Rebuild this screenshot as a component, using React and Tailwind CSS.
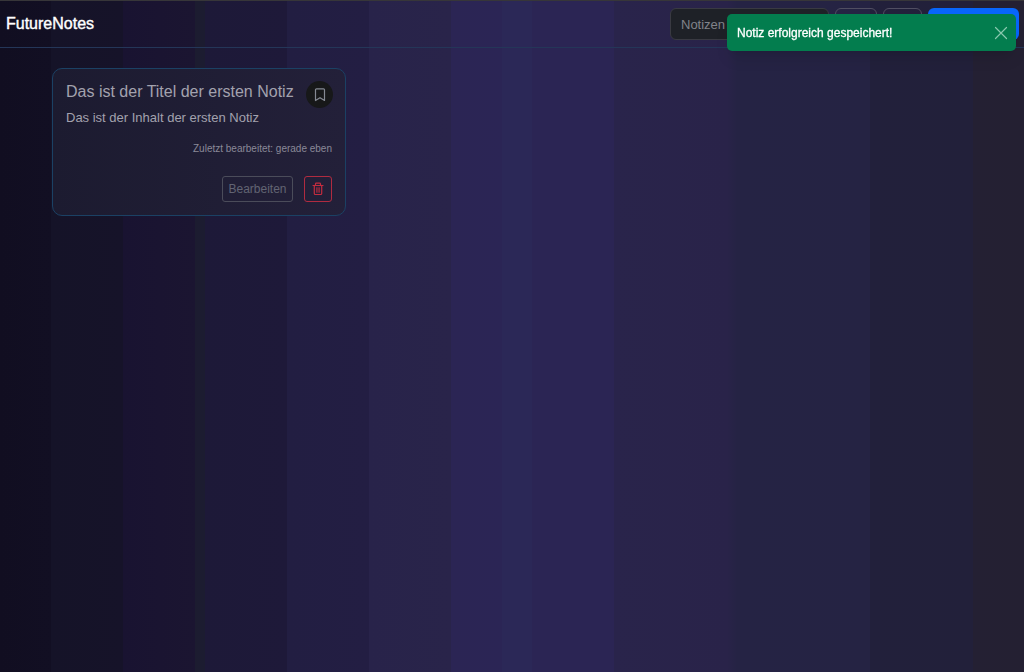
import React, { useState } from 'react';

function BookmarkIcon() {
  return (
    <svg viewBox="0 0 12 14" className="w-3 h-3.5" fill="none" stroke="currentColor" strokeWidth="1.2" strokeLinejoin="round" aria-hidden="true">
      <path d="M1.5 12.5V1.8c0-.6.4-1 1-1h7c.6 0 1 .4 1 1v10.7L6 9.7z" />
    </svg>
  );
}

function TrashIcon() {
  return (
    <svg viewBox="0 0 12 14" className="w-3 h-3.5" fill="none" stroke="currentColor" strokeWidth="1.2" strokeLinecap="round" strokeLinejoin="round" aria-hidden="true">
      <path d="M1 3.5h10M3.5 3.3V2c0-.5.3-.8.8-.8h3.4c.5 0 .8.3.8.8v1.3M2.3 3.7v7.8c0 .6.4 1 1 1h5.4c.6 0 1-.4 1-1V3.7" />
      <path d="M4.7 5.7v4.6M6 5.7v4.6M7.3 5.7v4.6" strokeWidth="0.8" />
    </svg>
  );
}

function CloseIcon() {
  return (
    <svg viewBox="0 0 14 14" className="w-3.5 h-3.5" fill="none" stroke="currentColor" strokeWidth="1.2" strokeLinecap="round" aria-hidden="true">
      <path d="M1.5 1.5l11 11M12.5 1.5l-11 11" />
    </svg>
  );
}

function Navbar({ search, setSearch }) {
  return (
    <header className="flex items-center justify-between h-12 pl-1.5 pr-[5px] border-t border-t-[#373639] border-b border-b-[#243658]">
      <a href="#" className="text-base leading-6 font-medium text-white [-webkit-text-stroke:0.4px_white]">FutureNotes</a>
      <div className="flex items-center gap-1.5">
        <input
          type="text"
          aria-label="Notizen durchsuchen"
          placeholder="Notizen durchsuchen"
          value={search}
          onChange={(e) => setSearch(e.target.value)}
          className="w-[159px] h-8 px-2.5 text-[13px] rounded-md bg-[#1e2127] border border-[#393a42] text-[#adb5bd] placeholder:text-[#81838a]"
        />
        <button aria-label="Sortieren" className="w-[42px] h-8 rounded-md border border-[#504e62]"></button>
        <button aria-label="Ansicht" className="w-[39px] h-8 rounded-md border border-[#504e62]"></button>
        <button aria-label="Neue Notiz" className="w-[91px] h-8 rounded-md bg-[#0866fb]"></button>
      </div>
    </header>
  );
}

function NoteCard({ note }) {
  return (
    <article className="w-[294px] p-3 pb-[13px] rounded-[10px] border border-[#1b4164] bg-linear-to-r from-[#1c1b30] to-[#232039]">
      <div className="flex items-start justify-between">
        <div className="pl-px">
          <h2 className="text-base leading-[22px] text-[#a3a2ae] whitespace-nowrap">{note.title}</h2>
          <p className="mt-[7px] text-[13px] leading-4 text-[#a3a2ae]">{note.content}</p>
        </div>
        <button aria-label="Merken" className="flex items-center justify-center shrink-0 w-[27px] h-[27px] rounded-full bg-[#171819] text-[#858993]">
          <BookmarkIcon />
        </button>
      </div>
      <p className="mt-[15px] pr-px text-right text-[10px] leading-4 text-[#8a8998]">Zuletzt bearbeitet: {note.edited}</p>
      <div className="flex justify-end gap-[11px] mt-[19px] pr-px">
        <button className="w-[71px] h-[26px] text-xs rounded-[3px] border border-[#4b4c5a] text-[#626473]">Bearbeiten</button>
        <button aria-label="Löschen" className="flex items-center justify-center w-7 h-[26px] rounded-[3px] border border-[#b02b40] text-[#c32c3f]">
          <TrashIcon />
        </button>
      </div>
    </article>
  );
}

function Toast({ message, onClose }) {
  return (
    <div role="status" className="fixed top-3.5 right-2 flex items-center justify-between w-[289px] h-[37px] pl-2.5 pr-2 rounded-[5px] bg-[#037d4e] text-white shadow-lg">
      <span className="text-xs [-webkit-text-stroke:0.3px_white]">{message}</span>
      <button aria-label="Schließen" onClick={onClose} className="text-[#8ac8ae]">
        <CloseIcon />
      </button>
    </div>
  );
}

export default function App() {
  const [search, setSearch] = useState('');
  const [toast, setToast] = useState('Notiz erfolgreich gespeichert!');

  const notes = [
    { id: 1, title: 'Das ist der Titel der ersten Notiz', content: 'Das ist der Inhalt der ersten Notiz', edited: 'gerade eben' },
  ];

  return (
    <div className="min-h-screen font-['Liberation_Sans',Arial,sans-serif] bg-[linear-gradient(90deg,#110e21_0%,#120f23_5%,#151328_5%,#161329_12%,#191331_12%,#1b1531_19%,#1c1c30_19%,#1c1c31_20%,#1d1938_20%,#1e1939_28%,#221e42_28%,#231e43_36%,#28234a_36%,#29244a_44%,#2b2554_44%,#2b2555_49%,#2b2857_49%,#2b2857_52%,#2b2554_52%,#2b2554_60%,#29244b_60%,#292349_71%,#252344_72%,#252343_85%,#22203b_85%,#22203a_95%,#242033_95%,#242032_100%)]">
      <Navbar search={search} setSearch={setSearch} />
      <main className="flex flex-wrap gap-5 px-[52px] py-5">
        {notes.filter((n) => n.title.toLowerCase().includes(search.toLowerCase())).map((n) => (
          <NoteCard key={n.id} note={n} />
        ))}
      </main>
      {toast && <Toast message={toast} onClose={() => setToast('')} />}
    </div>
  );
}
